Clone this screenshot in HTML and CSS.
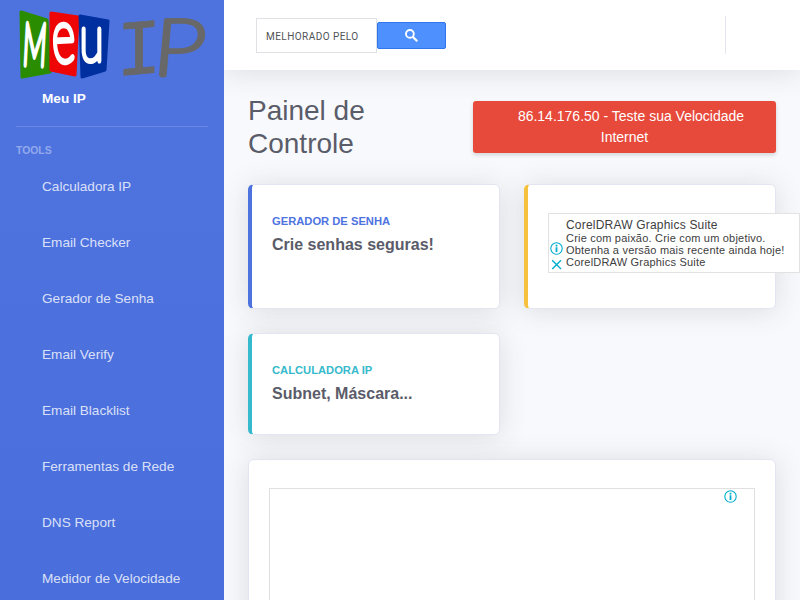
FILE: index.html
```html
<!DOCTYPE html>
<html lang="pt">
<head>
<meta charset="utf-8">
<title>Meu IP</title>
<link rel="stylesheet" href="styles.css">
</head>
<body>
<div class="wrapper">
  <nav class="sidebar">
    <svg class="logo" width="192" height="76" viewBox="16 6 192 76" role="img" aria-label="Meu IP">
      <g stroke-width="3" stroke-linejoin="round">
        <path fill="#2a8c00" stroke="#2a8c00" d="M21 12L47 20L50 72L22 77Z"/>
        <path fill="#ee0505" stroke="#ee0505" d="M51 13L78 17L75 75L51 70Z"/>
        <path fill="#002f9f" stroke="#002f9f" d="M80 16L108 21L105 70L82 77Z"/>
      </g>
      <g class="logo-tile">
        <text class="logo-m" transform="translate(22 64.500) rotate(3) scale(.53 1.17)">M</text>
        <text transform="translate(53 62.500) rotate(-3) scale(.9 1.5)">e</text>
        <text transform="translate(79.500 60.500) scale(.89 1.34)">u</text>
      </g>
      <g class="logo-name">
        <text class="logo-i" transform="translate(116.500 76) skewY(-5) scale(1.25 1.32)">I</text>
        <text class="logo-p" transform="translate(155 75) skewX(4) scale(1.66 1.3)">P</text>
      </g>
    </svg>
    <a class="nav-link active">Meu IP</a>
    <hr class="divider">
    <div class="heading">Tools</div>
    <a class="nav-link">Calculadora IP</a>
    <a class="nav-link">Email Checker</a>
    <a class="nav-link">Gerador de Senha</a>
    <a class="nav-link">Email Verify</a>
    <a class="nav-link">Email Blacklist</a>
    <a class="nav-link">Ferramentas de Rede</a>
    <a class="nav-link">DNS Report</a>
    <a class="nav-link">Medidor de Velocidade</a>
  </nav>
  <div class="content">
    <header class="topbar">
      <div class="search">
        <div class="search-box">MELHORADO PELO</div>
        <div class="search-btn"><svg width="13" height="13" viewBox="0 0 13 13"><circle cx="4.900" cy="4.900" r="3.900" fill="none" stroke="#fff" stroke-width="1.900"/><path fill="none" stroke="#fff" stroke-width="2.200" d="M7.700 7.700L12.200 12.200"/></svg></div>
      </div>
      <div class="topbar-divider"></div>
    </header>
    <main class="main">
      <div class="title-row">
        <h1>Painel de Controle</h1>
        <a class="speed-btn">86.14.176.50 - Teste sua Velocidade Internet</a>
      </div>
      <div class="cards">
        <section class="card accent primary tall">
          <div class="label">Gerador de Senha</div>
          <div class="value">Crie senhas seguras!</div>
        </section>
        <section class="card accent warning tall">
          <div class="ad">
            <div class="ad-icons">
              <svg width="13" height="13" viewBox="0 0 13 13"><circle cx="6.500" cy="6.500" r="5.700" fill="none" stroke="#00aecd" stroke-width="1.100"/><path fill="#00aecd" d="M5.600 2.700h1.800v1.700H5.600zM5.600 5.300h1.800v4.700H5.600z"/></svg>
              <svg width="13" height="13" viewBox="0 0 13 13"><path fill="none" stroke="#00aecd" stroke-width="1.400" d="M2.200 2.200l8.800 8.800M11 2.200L2.200 11"/></svg>
            </div>
            <div class="ad-text">
              <div class="ad-title">CorelDRAW Graphics Suite</div>
              <div>Crie com paixão. Crie com um objetivo.</div>
              <div>Obtenha a versão mais recente ainda hoje!</div>
              <div>CorelDRAW Graphics Suite</div>
            </div>
          </div>
        </section>
        <section class="card accent info">
          <div class="label">Calculadora IP</div>
          <div class="value">Subnet, Máscara...</div>
        </section>
      </div>
      <section class="card panel">
        <div class="banner">
          <svg width="13" height="13" viewBox="0 0 13 13"><circle cx="6.500" cy="6.500" r="5.700" fill="none" stroke="#00aecd" stroke-width="1.100"/><path fill="#00aecd" d="M5.600 2.700h1.800v1.700H5.600zM5.600 5.300h1.800v4.700H5.600z"/></svg>
        </div>
      </section>
    </main>
  </div>
</div>
</body>
</html>
```
FILE: styles.css
```css
*, *::before, *::after { box-sizing: border-box; }
body {
  margin: 0;
  height: 600px;
  overflow: hidden;
  font: 16px/1.5 "Liberation Sans", Arial, sans-serif;
  color: #858796;
  background: #f8f9fc;
}
.wrapper { display: flex; height: 600px; overflow: hidden; }
.sidebar {
  flex: 0 0 224px;
  height: 600px;
  overflow: hidden;
  display: flex;
  flex-direction: column;
  background: linear-gradient(180deg, #4e73df 23%, #4a6fdc 100%);
}
.logo { display: block; margin: 6px 16px 0; flex: none; overflow: visible; }
.logo-tile { font: 100 50px Lato, sans-serif; fill: #fff; stroke: #fff; stroke-width: 3.900; stroke-linejoin: round; }
.logo-m { stroke-width: 5.400; }
.logo-name { font: italic 100 60px Lato, sans-serif; fill: #686868; stroke: #686868; stroke-width: 3.800; stroke-linejoin: round; }
.logo-i { font-family: "Liberation Mono", monospace; font-style: normal; stroke-width: .6; }
.nav-link {
  height: 56px;
  flex: none;
  padding: 18px 16px 0 42px;
  font-size: 13.6px;
  line-height: 20px;
  color: rgba(255, 255, 255, .8);
}
.nav-link.active { height: 44px; padding-top: 7px; color: #fff; font-weight: 700; }
.divider { flex: none; margin: 0 16px 16px; height: 1px; border: 0; background: rgba(255, 255, 255, .15); }
.heading {
  flex: none;
  padding: 0 16px;
  height: 16px;
  font-size: 10.4px;
  line-height: 15.600px;
  font-weight: 700;
  text-transform: uppercase;
  color: rgba(255, 255, 255, .4);
}
.content { flex: 1; min-width: 0; height: 600px; overflow: hidden; }
.topbar {
  height: 70px;
  display: flex;
  justify-content: space-between;
  align-items: center;
  padding: 0 74px 0 32px;
  background: #fff;
  box-shadow: 0 2px 28px rgba(58, 59, 69, .15);
}
.topbar-divider { width: 1px; height: 38px; background: #e3e6f0; }
.search { display: flex; align-items: center; }
.search-box {
  width: 121px;
  height: 35px;
  border: 1px solid #dfe1e5;
  padding: 1px 0 0 9px;
  font: 10px/33px Roboto, sans-serif;
  letter-spacing: .45px;
  color: #505357;
  white-space: nowrap;
}
.search-btn {
  display: flex;
  align-items: center;
  justify-content: center;
  width: 69px;
  height: 27px;
  border: 1px solid #2f76ec;
  border-radius: 2px;
  background: #4d90fe;
}
.main { padding: 24px; }
.title-row { display: flex; align-items: center; justify-content: space-between; height: 66px; margin-bottom: 24px; }
h1 { width: 180px; margin: 0; font-size: 28px; line-height: 33px; font-weight: 400; color: #5a5c69; }
.speed-btn {
  width: 303px;
  height: 52px;
  padding: 5px 8px 5px 8px;
  text-indent: 13px;
  font-size: 14px;
  line-height: 21px;
  text-align: center;
  color: #fff;
  border-radius: 3px;
  background: #e74a3b;
  box-shadow: 0 2px 4px rgba(58, 59, 69, .2);
}
.cards { display: grid; grid-template-columns: 252px 252px; gap: 24px; margin-bottom: 24px; }
.card {
  border: 1px solid #e3e6f0;
  border-radius: 5.600px;
  background: #fff;
  box-shadow: 0 2px 28px rgba(58, 59, 69, .15);
}
.accent { height: 102px; padding: 28px 19px 0 20px; border-left-width: 4px; }
.tall { height: 125px; }
.primary { border-left-color: #4e73df; }
.info { border-left-color: #36b9cc; }
.warning { border-left-color: #f6c23e; }
.label { margin-bottom: 5px; font-size: 11.200px; line-height: 17px; font-weight: 700; text-transform: uppercase; }
.primary .label { color: #4e73df; }
.info .label { color: #36b9cc; }
.value { font-size: 16px; line-height: 20px; font-weight: 700; color: #5a5c69; }
.ad {
  display: flex;
  width: 252px;
  height: 60px;
  border: 1px solid #e2e2e2;
  background: #fff;
  color: #404040;
}
.ad-icons { display: flex; flex-direction: column; gap: 3px; width: 17px; padding: 28px 0 0 1px; }
.ad-text { padding-top: 4px; font-size: 11px; line-height: 12px; letter-spacing: .2px; white-space: nowrap; }
.ad-title { font-size: 12px; line-height: 14px; letter-spacing: .2px; }
.panel { height: 300px; padding: 28px 20px; }
.banner { display: flex; justify-content: flex-end; height: 250px; padding: 1px 17px 0 0; border: 1px solid #e0e0e0; }
```
